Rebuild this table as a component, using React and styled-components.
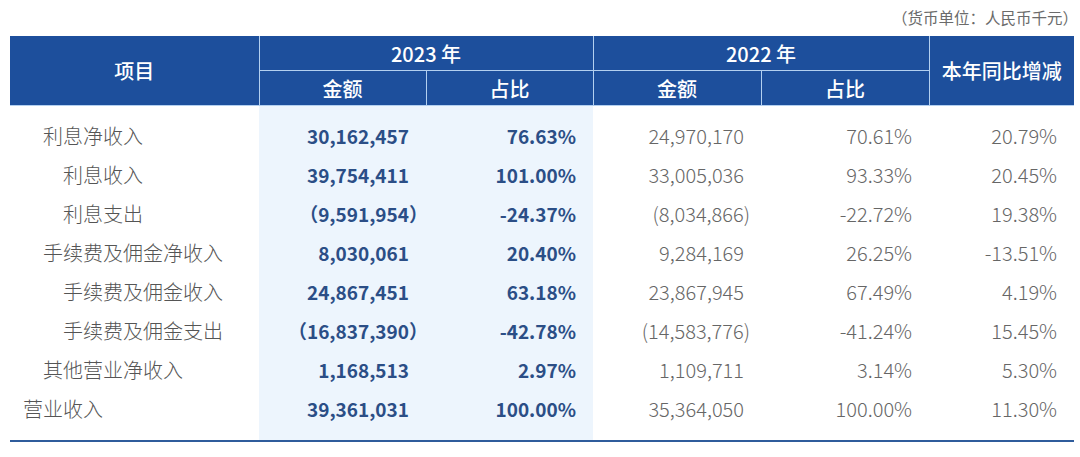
import styled, { createGlobalStyle } from 'styled-components';

const GlobalStyle = createGlobalStyle`
  body {
    margin: 0;
    background: #fff;
    font-family: "Noto Sans CJK SC", "Noto Sans", sans-serif;
  }
`;

const Page = styled.div`
  width: 1080px;
  padding: 6px 10px 0 10px;
  box-sizing: border-box;
`;

const Note = styled.div`
  text-align: right;
  font-size: 15.5px;
  line-height: 22px;
  color: #6b6b6b;
  margin-right: -8px;
  margin-bottom: 8px;
`;

const Table = styled.table`
  width: 1064px;
  border-collapse: collapse;
  table-layout: fixed;
`;

const Col = styled.col`
  width: ${(p) => p.$w}px;
  background: ${(p) => (p.$hl ? '#edf5fd' : 'transparent')};
`;

const Th = styled.th`
  background: #1d4f9c;
  color: #fff;
  font-size: 20px;
  font-weight: 500;
  height: 34px;
  padding: 0;
  text-align: center;
  border: 1px solid #b3d0f0;
  border-top: none;

  &:first-child {
    border-left: none;
  }
  &:last-child {
    border-right: none;
  }
`;

const Tbody = styled.tbody`
  tr:first-child td {
    padding-top: 10px;
  }
  tr:last-child td {
    padding-bottom: 12px;
    border-bottom: 2px solid #2f5c9c;
  }
`;

const Label = styled.td`
  font-size: 20px;
  font-weight: 300;
  color: #555;
  height: 39px;
  padding: 0 0 0 ${(p) => 13 + p.$level * 20}px;
  white-space: nowrap;
`;

const Num = styled.td`
  font-size: ${(p) => (p.$strong ? 19 : 20)}px;
  text-align: right;
  padding: 0 17px 0 0;
  white-space: nowrap;
  color: ${(p) => (p.$strong ? '#2b4e86' : '#666')};
  font-weight: ${(p) => (p.$strong ? 700 : 300)};
`;

const Close = styled.span`
  margin-right: ${(p) => (p.$wide ? '-1em' : '-0.3em')};
`;

const rows = [
  ['利息净收入', 1, '30,162,457', '76.63%', '24,970,170', '70.61%', '20.79%'],
  ['利息收入', 2, '39,754,411', '101.00%', '33,005,036', '93.33%', '20.45%'],
  ['利息支出', 2, '-9,591,954', '-24.37%', '-8,034,866', '-22.72%', '19.38%'],
  ['手续费及佣金净收入', 1, '8,030,061', '20.40%', '9,284,169', '26.25%', '-13.51%'],
  ['手续费及佣金收入', 2, '24,867,451', '63.18%', '23,867,945', '67.49%', '4.19%'],
  ['手续费及佣金支出', 2, '-16,837,390', '-42.78%', '-14,583,776', '-41.24%', '15.45%'],
  ['其他营业净收入', 1, '1,168,513', '2.97%', '1,109,711', '3.14%', '5.30%'],
  ['营业收入', 0, '39,361,031', '100.00%', '35,364,050', '100.00%', '11.30%'],
];

function Amount({ value, wide }) {
  if (!value.startsWith('-')) return value;
  const body = value.slice(1);
  return (
    <>
      {wide ? '（' : '('}
      {body}
      <Close $wide={wide}>{wide ? '）' : ')'}</Close>
    </>
  );
}

export default function App() {
  return (
    <Page>
      <GlobalStyle />
      <Note>（货币单位：人民币千元）</Note>
      <Table>
        <colgroup>
          <Col $w={249} />
          <Col $w={167} $hl />
          <Col $w={167} $hl />
          <Col $w={168} />
          <Col $w={168} />
          <Col $w={145} />
        </colgroup>
        <thead>
          <tr>
            <Th rowSpan={2}>项目</Th>
            <Th colSpan={2}>2023 年</Th>
            <Th colSpan={2}>2022 年</Th>
            <Th rowSpan={2}>本年同比增减</Th>
          </tr>
          <tr>
            <Th>金额</Th>
            <Th>占比</Th>
            <Th>金额</Th>
            <Th>占比</Th>
          </tr>
        </thead>
        <Tbody>
          {rows.map(([label, level, a23, p23, a22, p22, chg]) => (
            <tr key={label}>
              <Label $level={level}>{label}</Label>
              <Num $strong>
                <Amount value={a23} wide />
              </Num>
              <Num $strong>{p23}</Num>
              <Num>
                <Amount value={a22} />
              </Num>
              <Num>{p22}</Num>
              <Num>{chg}</Num>
            </tr>
          ))}
        </Tbody>
      </Table>
    </Page>
  );
}
